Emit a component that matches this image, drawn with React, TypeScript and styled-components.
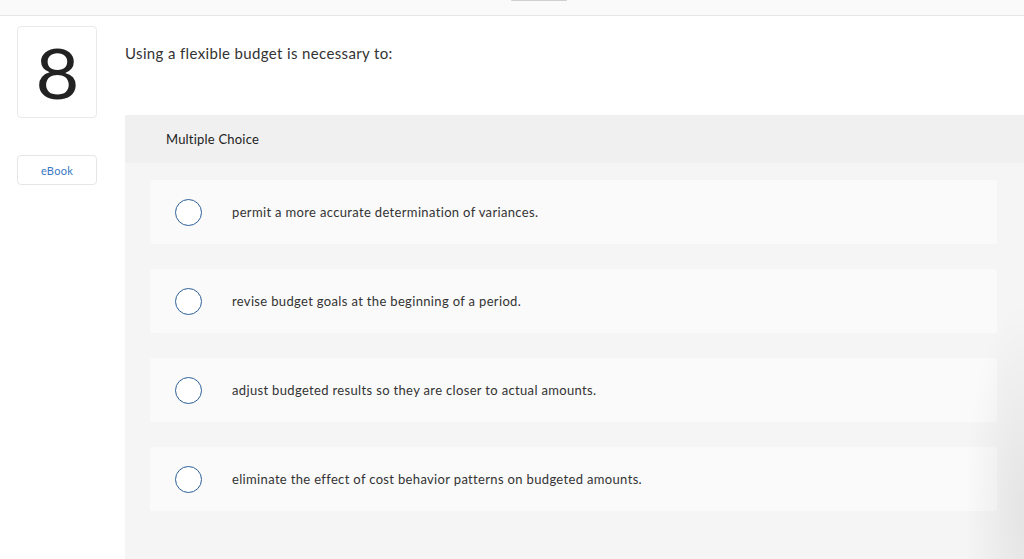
import React from "react";
import styled, { createGlobalStyle } from "styled-components";

const Global = createGlobalStyle`
  html, body { margin: 0; padding: 0; background: #ffffff; }
  body { font-family: "Lato", "Open Sans", Arial, sans-serif; color: #333; overflow: hidden; }
`;

const Page = styled.div`
  width: 1024px;
  height: 559px;
  position: relative;
  overflow: hidden;
  background: #fff;
`;

const TopBar = styled.div`
  height: 15px;
  background: #fafafa;
  border-bottom: 1px solid #e6e6e6;
  display: flex;
  justify-content: center;
`;

const Handle = styled.div`
  width: 56px;
  height: 1px;
  margin-left: 54px;
  background: #cfcfcf;
  border-radius: 0 0 3px 3px;
`;

const Body = styled.div`
  display: flex;
  gap: 28px;
  padding-left: 17px;
`;

const Side = styled.div`
  width: 80px;
  padding-top: 10px;
  display: flex;
  flex-direction: column;
  gap: 37px;
`;

const NumberBox = styled.div`
  box-sizing: border-box;
  height: 92px;
  border: 1px solid #e9e9e9;
  border-radius: 4px;
  display: flex;
  align-items: center;
  justify-content: center;
`;

const Digit = styled.span`
  display: inline-block;
  font-family: "Lato", sans-serif;
  font-weight: 400;
  font-size: 70px;
  color: #222;
  line-height: 1;
  transform: scaleX(1.08);
`;

const EBook = styled.button`
  box-sizing: border-box;
  height: 30px;
  width: 80px;
  border: 1px solid #e6e6e6;
  border-radius: 4px;
  background: #fff;
  color: #3a78c2;
  font-family: "Lato", sans-serif;
  font-size: 11px;
  letter-spacing: 0.3px;
  padding: 0;
`;

const Main = styled.div`
  flex: 1;
  display: flex;
  flex-direction: column;
`;

const Question = styled.div`
  height: 99px;
  padding-top: 28px;
  box-sizing: border-box;
  font-size: 15px;
  letter-spacing: 0.36px;
  color: #333;
`;

const Panel = styled.div`
  background: #f5f5f5;
  height: 444px;
  display: flex;
  flex-direction: column;
`;

const PanelHeader = styled.div`
  height: 48px;
  background: #f0f0f0;
  display: flex;
  align-items: center;
  padding-left: 41px;
  font-size: 13px;
  letter-spacing: 0.2px;
  color: #222;
`;

const Options = styled.div`
  display: flex;
  flex-direction: column;
  gap: 25px;
  padding: 17px 27px 0 25px;
`;

const Option = styled.label`
  height: 64px;
  background: #fafafa;
  border-radius: 3px;
  display: flex;
  align-items: center;
  padding-left: 25px;
  gap: 30px;
  font-size: 13px;
  letter-spacing: 0.34px;
  color: #333;
`;

const Radio = styled.span`
  box-sizing: border-box;
  width: 27px;
  height: 27px;
  border-radius: 50%;
  border: 1.5px solid #2b5f98;
  background: #fff;
  flex-shrink: 0;
`;

const EdgeShade = styled.div`
  position: absolute;
  right: 0;
  top: 300px;
  width: 60px;
  height: 300px;
  background: radial-gradient(ellipse at 100% 70%, rgba(0,0,0,0.07), rgba(0,0,0,0) 70%);
  pointer-events: none;
`;

const choices = [
  "permit a more accurate determination of variances.",
  "revise budget goals at the beginning of a period.",
  "adjust budgeted results so they are closer to actual amounts.",
  "eliminate the effect of cost behavior patterns on budgeted amounts.",
];

export default function App() {
  return (
    <Page>
      <Global />
      <TopBar>
        <Handle />
      </TopBar>
      <Body>
        <Side>
          <NumberBox>
            <Digit>8</Digit>
          </NumberBox>
          <EBook>eBook</EBook>
        </Side>
        <Main>
          <Question>Using a flexible budget is necessary to:</Question>
          <Panel>
            <PanelHeader>Multiple Choice</PanelHeader>
            <Options>
              {choices.map((c) => (
                <Option key={c}>
                  <Radio />
                  <span>{c}</span>
                </Option>
              ))}
            </Options>
          </Panel>
        </Main>
      </Body>
      <EdgeShade />
    </Page>
  );
}
